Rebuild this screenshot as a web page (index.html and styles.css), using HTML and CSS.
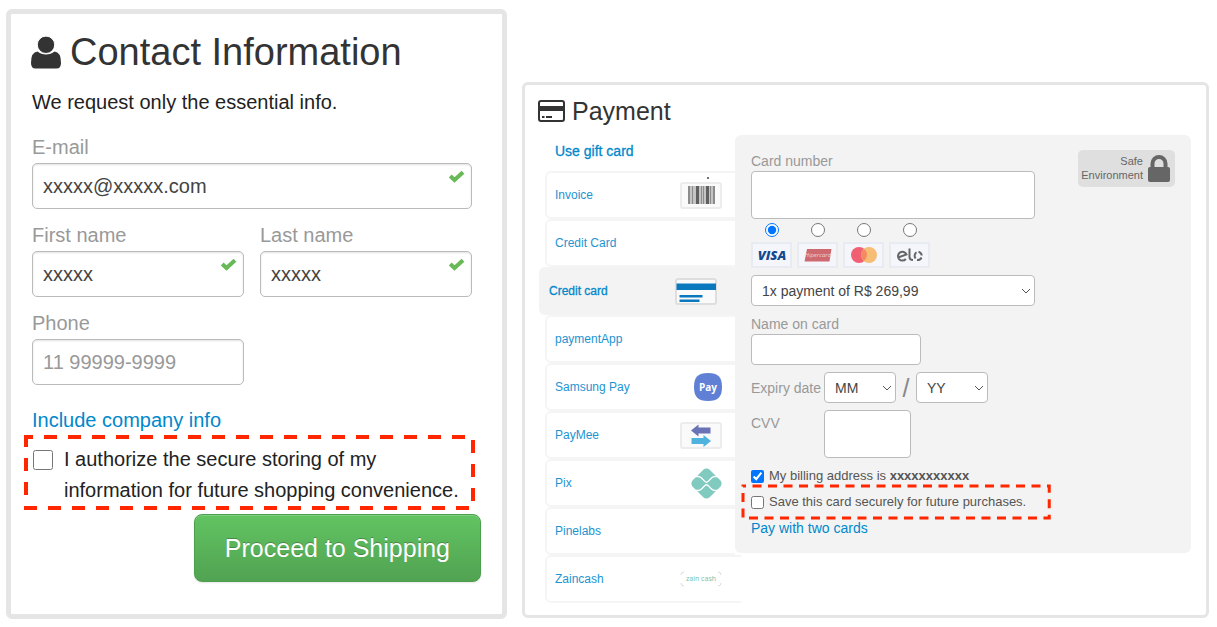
FILE: index.html
```html
<!DOCTYPE html>
<html lang="en">
<head>
<meta charset="utf-8">
<meta name="viewport" content="width=device-width, initial-scale=1">
<title>Checkout</title>
<link rel="stylesheet" href="styles.css">
</head>
<body>
<main class="checkout">
  <section class="card contact">
    <h1 class="contact-title">
      <svg class="title-user" viewBox="0 0 30 33" width="30" height="33" aria-hidden="true"><path d="M6.500 15.500Q0 16 0 27q0 5.500 4.500 5.500h21Q30 32.500 30 27q0-11-6.500-11.500-3.500 3-8.500 3t-8.500-3z"/><circle class="head" cx="15" cy="8.800" r="8.700"/></svg>
      Contact Information
    </h1>
    <p class="contact-lead">We request only the essential info.</p>
    <form class="contact-form">
      <div class="field field-wide">
        <label for="email">E-mail</label>
        <div class="input-box">
          <input id="email" type="text" value="xxxxx@xxxxx.com">
          <svg class="tick" viewBox="0 0 17 13" width="17" height="13" aria-hidden="true"><path d="M2.200 6 6.500 10 15 2.200"/></svg>
        </div>
      </div>
      <div class="field">
        <label for="first">First name</label>
        <div class="input-box">
          <input id="first" type="text" value="xxxxx">
          <svg class="tick" viewBox="0 0 17 13" width="17" height="13" aria-hidden="true"><path d="M2.200 6 6.500 10 15 2.200"/></svg>
        </div>
      </div>
      <div class="field">
        <label for="last">Last name</label>
        <div class="input-box">
          <input id="last" type="text" value="xxxxx">
          <svg class="tick" viewBox="0 0 17 13" width="17" height="13" aria-hidden="true"><path d="M2.200 6 6.500 10 15 2.200"/></svg>
        </div>
      </div>
      <div class="field">
        <label for="phone">Phone</label>
        <div class="input-box"><input id="phone" type="text" placeholder="11 99999-9999"></div>
      </div>
    </form>
    <a class="company-link" href="#">Include company info</a>
    <div class="marked consent">
      <svg class="marks marks-large" aria-hidden="true"><rect width="100%" height="100%"/></svg>
      <input id="consent" type="checkbox">
      <label for="consent">I authorize the secure storing of my information for future shopping convenience.</label>
    </div>
    <button class="proceed" type="button">Proceed to Shipping</button>
  </section>

  <section class="card payment">
    <h2 class="payment-title">
      <svg viewBox="0 0 27 22" width="27" height="22" aria-hidden="true"><rect class="line" x="1" y="1" width="25" height="20" rx="2"/><path d="M1 6h25v5H1zM4 16h2.500v2H4zM8 16h6v2H8z"/></svg>
      Payment
    </h2>
    <div class="payment-body">
      <nav class="methods">
        <a class="gift" href="#">Use gift card</a>
        <a class="method" href="#">Invoice
          <svg class="spill" viewBox="0 0 42 27" width="42" height="27" aria-hidden="true"><rect class="tile" x="1" y="1" width="40" height="25" rx="2"/><path fill="#c4c4c4" d="M8 4h27v18H8z"/><path fill="#8c8c8c" d="M8 4h2v18H8zM12 4h1v18h-1zM21 4h1v18h-1zM23 4h1v18h-1zM30 4h1v18h-1zM33 4h2v18h-2z"/><path fill="#606060" d="M16 4h3v18h-3zM26 4h3v18h-3z"/><circle cx="28" cy="-4" r="1" fill="#444"/></svg>
        </a>
        <a class="method" href="#">Credit Card</a>
        <a class="method active" href="#" aria-current="true">Credit card
          <svg viewBox="0 0 42 27" width="42" height="27" aria-hidden="true"><rect class="tile" x="1" y="1" width="40" height="25" rx="2"/><path fill="#0a78bd" d="M1.500 5.500h39.500v6.500H1.500zM4.500 17h23v2.500H4.500zM4.500 21.500h20V24H4.500z"/></svg>
        </a>
        <a class="method" href="#">paymentApp</a>
        <a class="method" href="#">Samsung Pay
          <svg viewBox="0 0 28 28" width="28" height="28" aria-hidden="true"><path fill="#5f80d4" d="M14 0C24 0 28 4 28 14s-4 14-14 14S0 24 0 14 4 0 14 0z"/><text class="pay-text" x="14" y="18" text-anchor="middle">Pay</text></svg>
        </a>
        <a class="method" href="#">PayMee
          <svg viewBox="0 0 42 27" width="42" height="27" aria-hidden="true"><rect class="tile" x="1" y="1" width="40" height="25" rx="2"/><path fill="#6973b5" d="M11 8.500 18.500 2.500v3h12v6h-12v3z"/><path fill="#4fb4dd" d="M31 19 23.500 13v3H11.500v6h12v3z"/></svg>
        </a>
        <a class="method" href="#">Pix
          <svg viewBox="0 0 31 31" width="31" height="31" aria-hidden="true"><rect x="3.500" y="3.500" width="24" height="24" rx="4.500" transform="rotate(45 15.500 15.500)" fill="#80cac0"/><path d="M3 8.500h4q2 0 3.500 1.500l3.300 3.400q1.700 1.700 3.400 0l3.300-3.400Q22 8.500 24 8.500h4M3 22.500h4q2 0 3.500-1.500l3.300-3.400q1.700-1.700 3.400 0l3.300 3.400q1.500 1.500 3.500 1.500h4" fill="none" stroke="#fff" stroke-width="1.300"/></svg>
        </a>
        <a class="method" href="#">Pinelabs</a>
        <a class="method last" href="#">Zaincash
          <svg viewBox="0 0 42 16" width="42" height="16" aria-hidden="true"><path d="M1 4q0-3 3-3M38 1q3 0 3 3M41 12q0 3-3 3M4 15q-3 0-3-3" fill="none" stroke="#ddd"/><text class="zain-text" x="21" y="10" text-anchor="middle">zain cash</text></svg>
        </a>
      </nav>

      <form class="panel">
        <div class="panel-fields">
          <label for="number">Card number</label>
          <input id="number" class="box tall number" type="text">
          <div class="brands">
            <label class="brand"><input type="radio" name="brand" checked aria-label="Visa">
              <svg viewBox="0 0 41 26" width="41" height="26" aria-hidden="true"><rect class="chip" x="1" y="1" width="39" height="24"/><text class="visa" x="21" y="18" text-anchor="middle">VISA</text></svg></label>
            <label class="brand"><input type="radio" name="brand" aria-label="Hipercard">
              <svg viewBox="0 0 41 26" width="41" height="26" aria-hidden="true"><rect class="chip" x="1" y="1" width="39" height="24"/><path fill="#cd696f" d="M10 7h24.500l-2 12.500H7.500z"/><text class="hiper" x="21" y="15" text-anchor="middle">Hipercard</text></svg></label>
            <label class="brand"><input type="radio" name="brand" aria-label="Mastercard">
              <svg viewBox="0 0 41 26" width="41" height="26" aria-hidden="true"><rect class="chip" x="1" y="1" width="39" height="24"/><circle cx="16" cy="13" r="8" fill="#f05f72"/><circle cx="26" cy="13" r="8" fill="#f6bd74"/><path fill="#f58a60" d="M21 6.800a8 8 0 0 1 0 12.400 8 8 0 0 1 0-12.400z"/></svg></label>
            <label class="brand"><input type="radio" name="brand" aria-label="Elo">
              <svg viewBox="0 0 41 26" width="41" height="26" aria-hidden="true"><rect class="chip" x="1" y="1" width="39" height="24"/><g class="elo"><path d="M9 15.500 17.500 12.500A4.400 4.400 0 1 0 16.800 17M20.500 6.500V15q0 3 3.500 3"/><path d="M27.500 10.300A4.300 4.300 0 0 0 26.600 16.500M29.500 9.700A4.300 4.300 0 0 1 32.700 13.500M32.500 15.500A4.300 4.300 0 0 1 28 18"/></g></svg></label>
          </div>
          <div class="select-box number">
            <select class="box" aria-label="Installments"><option>1x payment of R$ 269,99</option></select>
            <svg viewBox="0 0 10 6" width="10" height="6" aria-hidden="true"><path d="M1 1l4 4 4-4"/></svg>
          </div>
          <label class="name-label" for="holder">Name on card</label>
          <input id="holder" class="box holder" type="text">
          <div class="details">
            <span class="detail-label">Expiry date</span>
            <div class="expiry">
              <div class="select-box date">
                <select class="box" aria-label="Expiry month"><option>MM</option></select>
                <svg viewBox="0 0 10 6" width="10" height="6" aria-hidden="true"><path d="M1 1l4 4 4-4"/></svg>
              </div>
              <span class="slash">/</span>
              <div class="select-box date">
                <select class="box" aria-label="Expiry year"><option>YY</option></select>
                <svg viewBox="0 0 10 6" width="10" height="6" aria-hidden="true"><path d="M1 1l4 4 4-4"/></svg>
              </div>
            </div>
            <label class="detail-label cvv-label" for="cvv">CVV</label>
            <input id="cvv" class="box tall cvv" type="text">
          </div>
          <div class="option">
            <input id="billing" type="checkbox" checked>
            <label for="billing">My billing address is <b>xxxxxxxxxxx</b></label>
          </div>
          <div class="marked option save">
            <svg class="marks marks-small" aria-hidden="true"><rect width="100%" height="100%"/></svg>
            <input id="save" type="checkbox">
            <label for="save">Save this card securely for future purchases.</label>
          </div>
          <a class="two-cards" href="#">Pay with two cards</a>
        </div>
        <div class="safe">
          <span>Safe<br>Environment</span>
          <svg viewBox="0 0 22 27" width="22" height="27" aria-hidden="true"><path class="shackle" d="M4.500 13V8.500a6.500 6.500 0 0 1 13 0V13"/><rect y="12" width="22" height="15" rx="2"/></svg>
        </div>
      </form>
    </div>
  </section>
</main>
</body>
</html>
```
FILE: styles.css
```css
* { box-sizing: border-box; }
body {
  margin: 0;
  background: #fff;
  color: #333;
  font-family: "Liberation Sans", Arial, sans-serif;
}
input, select, button { font: inherit; margin: 0; }
a { color: #0088cc; text-decoration: none; }
svg { display: block; flex: none; }

.checkout {
  display: grid;
  grid-template-columns: 501fr 687fr;
  align-items: start;
  gap: 15px;
  padding: 9px 8px 8px 6px;
}
.card { border: 5px solid #e5e5e5; border-radius: 6px; }

/* Contact card */
.contact {
  display: flex;
  flex-direction: column;
  padding: 16px 30px 32px 21px;
  font-size: 20px;
  line-height: 24px;
}
.contact-title {
  display: flex;
  align-items: center;
  gap: 9px;
  margin: 0 0 16px -1px;
  font-size: 38px;
  font-weight: 400;
  line-height: 44px;
}
.title-user { fill: #333; }
.title-user .head { stroke: #fff; stroke-width: 1; }
.contact-lead { margin: 0 0 21px; color: #222; }
.contact-form {
  display: grid;
  grid-template-columns: 1fr 1fr;
  gap: 14px 16px;
}
.field { display: flex; flex-direction: column; gap: 4px; }
.field-wide { grid-column: 1 / -1; }
.field label { color: #999; }
.input-box { position: relative; }
.input-box input {
  display: block;
  width: 100%;
  height: 46px;
  padding: 0 10px;
  border: 1px solid #bbb;
  border-radius: 5px;
  background: #fff;
  box-shadow: inset 0 1px 2px rgba(0, 0, 0, .12);
  color: #444;
}
.input-box input::placeholder { color: #999; opacity: 1; }
.tick {
  position: absolute;
  top: 7px;
  right: 7px;
  fill: none;
  stroke: #67ba56;
  stroke-width: 4;
}
.company-link { align-self: flex-start; margin-top: 23px; }

.marked { position: relative; }
.marks {
  position: absolute;
  overflow: visible;
  pointer-events: none;
}
.marks rect { fill: none; stroke: #ff2600; }
.marks-large {
  inset: 2px;
  width: calc(100% - 4px);
  height: calc(100% - 4px);
  stroke-width: 4;
  stroke-dasharray: 13 11;
  stroke-dashoffset: 6;
}
.marks-small {
  inset: 1px;
  width: calc(100% - 2px);
  height: calc(100% - 2px);
  stroke-width: 3;
  stroke-dasharray: 9 6.500;
  stroke-dashoffset: 6;
}
.consent {
  display: flex;
  align-items: flex-start;
  gap: 11px;
  margin: 3px -3px 4px -8px;
  padding: 9px 0 4px 9px;
  color: #222;
  line-height: 31px;
}
.consent input { flex: none; width: 20px; height: 20px; margin-top: 6px; }
.proceed {
  align-self: flex-end;
  height: 68px;
  margin-right: -9px;
  padding: 0 30px;
  border: 1px solid #4c9f4c;
  border-radius: 8px;
  background: linear-gradient(#62c462, #51a351);
  box-shadow: inset 0 1px 0 rgba(255, 255, 255, .2), 0 1px 2px rgba(0, 0, 0, .1);
  color: #fff;
  font-size: 25px;
  text-shadow: 0 -1px 0 rgba(0, 0, 0, .25);
}

/* Payment card */
.payment {
  margin-top: 73px;
  padding: 10px 15px 12px 13px;
  border-width: 3px;
  font-size: 14px;
  line-height: 18px;
}
.payment-title {
  display: flex;
  align-items: center;
  gap: 7px;
  margin: 0 0 8px;
  font-size: 25px;
  font-weight: 400;
  line-height: 32px;
}
.payment-title svg { fill: #333; }
.payment-title .line { fill: none; stroke: #333; stroke-width: 2; }
.payment-body {
  display: grid;
  grid-template-columns: 197px 1fr;
  align-items: start;
}
.methods {
  display: flex;
  flex-direction: column;
  padding-left: 7px;
}
.gift { margin: 7px 0 11px 10px; -webkit-text-stroke: 0.3px #0088cc; }
.method {
  display: flex;
  align-items: center;
  justify-content: space-between;
  height: 48px;
  padding: 0 13px 0 8px;
  border: 2px solid #f5f5f5;
  border-right: 0;
  border-radius: 6px 0 0 6px;
  color: #1c94d2;
  font-size: 12px;
}
.method.active {
  margin-left: -6px;
  padding-right: 18px;
  background: #f3f3f3;
  border-color: #f3f3f3;
  color: #0088cc;
  -webkit-text-stroke: 0.3px #0088cc;
}
.method.last { margin-right: -6px; padding-right: 19px; }
.spill { overflow: visible; }
.tile { fill: #fafafa; stroke: #ececec; stroke-width: 2; }
.active .tile { stroke: #dedede; }
.pay-text { fill: #fff; font: bold 10px "Open Sans", sans-serif; }
.zain-text { fill: #7cc4ae; font: 7px "Noto Sans", sans-serif; }

.panel {
  display: flex;
  align-items: flex-start;
  justify-content: space-between;
  padding: 15px 16px 16px;
  border-radius: 6px;
  background: #f3f3f3;
  color: #555;
}
.panel-fields {
  display: flex;
  flex: 1;
  flex-direction: column;
  align-items: flex-start;
  padding-top: 2px;
}
.panel-fields > label, .detail-label { color: #999; }
.box {
  width: 100%;
  height: 31px;
  padding: 0 10px;
  border: 1px solid #bbb;
  border-radius: 4px;
  background: #fff;
  color: #444;
}
.box.tall { height: 48px; }
.panel-fields .number { width: 284px; }
.number.box { margin-top: 1px; }
.brands { display: flex; gap: 5px; margin: 4px 0 7px; }
.brand { display: flex; flex-direction: column; align-items: center; gap: 5px; }
.brand input { width: 14px; height: 14px; }
.chip { fill: #f4f6fc; stroke: #e8ebf2; stroke-width: 2; }
.visa { fill: #15498f; font: italic 800 13px "Open Sans", sans-serif; }
.hiper { fill: #f3d3d5; font: italic 6px "Open Sans", sans-serif; }
.elo path { fill: none; stroke: #666; stroke-width: 2; }
.select-box { display: grid; align-items: center; }
.select-box select { grid-area: 1 / 1; appearance: none; }
.select-box svg {
  grid-area: 1 / 1;
  justify-self: end;
  margin-right: 4px;
  fill: none;
  stroke: #555;
  stroke-width: 1;
  pointer-events: none;
}
.name-label { margin-top: 9px; }
.panel-fields .holder { width: 170px; margin-top: 1px; }
.details {
  display: grid;
  grid-template-columns: 73px auto;
  row-gap: 7px;
  margin: 7px 0 9px;
}
.detail-label { align-self: center; white-space: nowrap; }
.cvv-label { align-self: start; margin-top: 4px; }
.expiry { display: flex; align-items: center; }
.date { width: 72px; }
.slash { width: 20px; color: #888; font-size: 25px; text-align: center; }
.cvv { width: 87px; }
.option { display: flex; align-items: center; gap: 5px; font-size: 13px; }
.option input { width: 13px; height: 13px; }
.save { margin-left: -9px; padding: 8px 24px 8px 9px; }
.safe {
  display: flex;
  align-items: center;
  gap: 5px;
  padding: 4px 5px 5px 3px;
  border-radius: 5px;
  background: #dfdfdf;
  color: #666;
  font-size: 11px;
  line-height: 14px;
  text-align: right;
}
.safe svg { fill: #666; }
.safe .shackle { fill: none; stroke: #666; stroke-width: 4; }
```
